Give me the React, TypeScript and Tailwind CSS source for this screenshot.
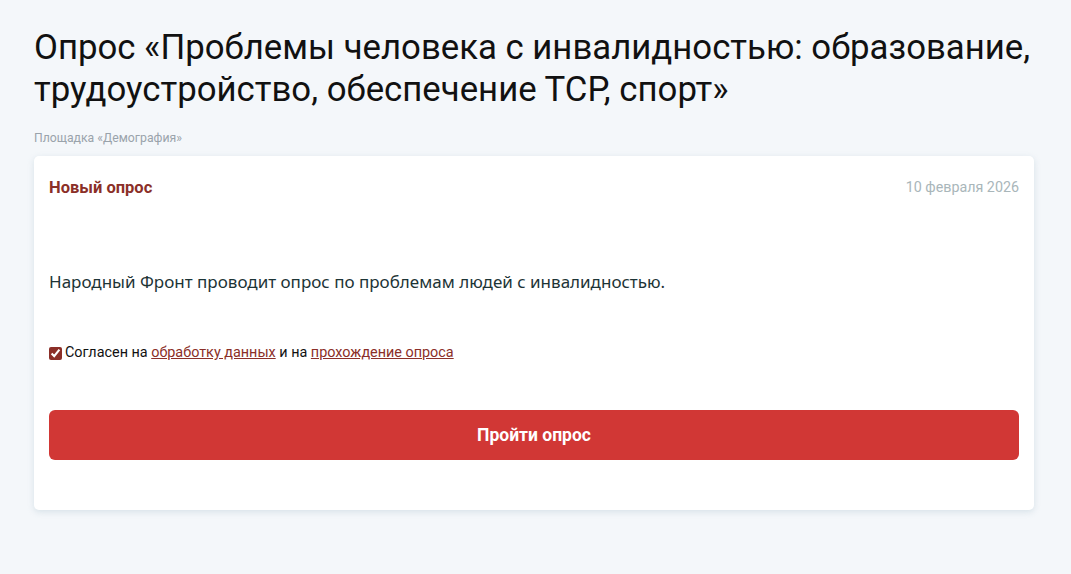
export default function App() {
  return (
    <div className="min-h-screen bg-[#f4f7fa] pt-[26px] pb-16" style={{ fontFamily: "Roboto, 'Noto Sans', sans-serif" }}>
      <div className="mx-[34px] w-[1000px]">
        <h1 className="text-[34.75px] leading-[42px] text-[#111]">
          Опрос «Проблемы человека с инвалидностью: образование, трудоустройство, обеспечение ТСР, спорт»
        </h1>
        <div className="mt-[20px] text-[12.25px] leading-[16px] text-[#9aa3ab]">Площадка «Демография»</div>
        <div className="mt-[10px] bg-white rounded-[5px] shadow-[0_2px_6px_rgba(180,200,210,0.45)] px-[15px] pt-[22px] pb-[50px]">
          <div className="flex items-center justify-between h-[20px]">
            <span className="text-[16.5px] font-bold text-[#8b2f28]">Новый опрос</span>
            <span className="text-[14.3px] text-[#a9b6ba]">10 февраля 2026</span>
          </div>
          <p className="mt-[72px] text-[17px] leading-[24px] text-[#1d3436] font-['Noto_Sans',sans-serif]">
            Народный Фронт проводит опрос по проблемам людей с инвалидностью.
          </p>
          <label className="mt-[50px] flex items-center gap-[3px] text-[14.4px] leading-[18px] text-[#111]">
            <input type="checkbox" defaultChecked className="w-[13px] h-[13px] accent-[#8b2f28] m-0" />
            <span>
              Согласен на <a href="#" className="underline text-[#8b2f28]">обработку данных</a> и на{" "}
              <a href="#" className="underline text-[#8b2f28]">прохождение опроса</a>
            </span>
          </label>
          <button className="mt-[48px] w-full h-[50px] rounded-[6px] bg-[#d13735] text-white text-[17.5px] font-bold">
            Пройти опрос
          </button>
        </div>
      </div>
    </div>
  );
}
